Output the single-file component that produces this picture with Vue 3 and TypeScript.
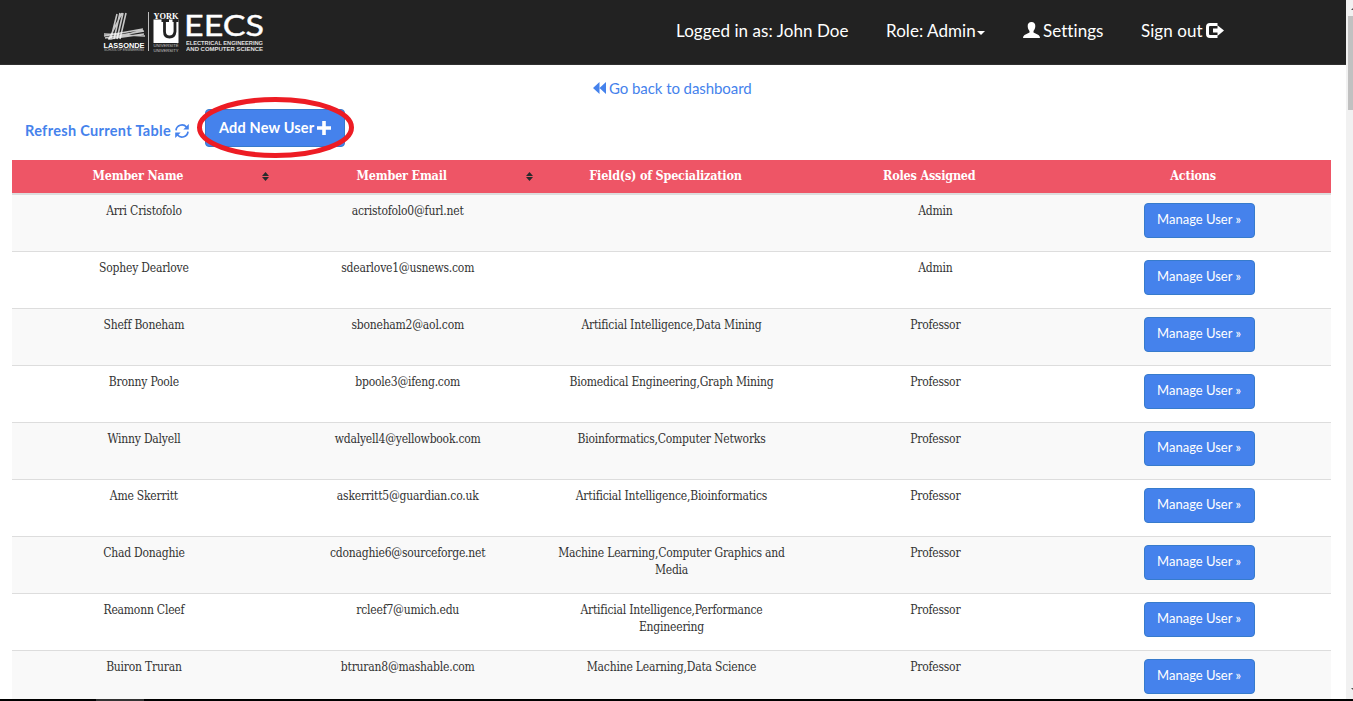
<script setup lang="ts">
interface Member {
  name: string
  email: string
  fields: string
  role: string
}

const members: Member[] = [
  { name: 'Arri Cristofolo', email: 'acristofolo0@furl.net', fields: '', role: 'Admin' },
  { name: 'Sophey Dearlove', email: 'sdearlove1@usnews.com', fields: '', role: 'Admin' },
  { name: 'Sheff Boneham', email: 'sboneham2@aol.com', fields: 'Artificial Intelligence,Data Mining', role: 'Professor' },
  { name: 'Bronny Poole', email: 'bpoole3@ifeng.com', fields: 'Biomedical Engineering,Graph Mining', role: 'Professor' },
  { name: 'Winny Dalyell', email: 'wdalyell4@yellowbook.com', fields: 'Bioinformatics,Computer Networks', role: 'Professor' },
  { name: 'Ame Skerritt', email: 'askerritt5@guardian.co.uk', fields: 'Artificial Intelligence,Bioinformatics', role: 'Professor' },
  { name: 'Chad Donaghie', email: 'cdonaghie6@sourceforge.net', fields: 'Machine Learning,Computer Graphics and Media', role: 'Professor' },
  { name: 'Reamonn Cleef', email: 'rcleef7@umich.edu', fields: 'Artificial Intelligence,Performance Engineering', role: 'Professor' },
  { name: 'Buiron Truran', email: 'btruran8@mashable.com', fields: 'Machine Learning,Data Science', role: 'Professor' },
]

const columns = [
  { label: 'Member Name', sortable: true },
  { label: 'Member Email', sortable: true },
  { label: 'Field(s) of Specialization', sortable: false },
  { label: 'Roles Assigned', sortable: false },
  { label: 'Actions', sortable: false },
]
</script>

<template>
  <div class="screen">
    <div class="viewport">
      <div class="page">
        <nav class="navbar">
          <svg class="logo" width="164" height="44" viewBox="0 0 164 44">
            <g stroke="#fff" fill="none">
              <path d="M14 4 8 28M17 3 11 29M20 3 14 29M23 3 17 29M19 3 6 29" stroke-width="1.600" opacity=".75" />
              <path d="M1 26 40 19M2 28 41 21M5 29 41 24M1 24 42 26M8 29 40 20" stroke-width="1.400" opacity=".75" />
              <path d="M45.500 2V41" stroke-width="1" opacity=".7" />
            </g>
            <g fill="#fff" font-family="'Liberation Sans', Arial, sans-serif">
              <text x="0.500" y="37.500" font-size="7" font-weight="700" textLength="41" lengthAdjust="spacingAndGlyphs">LASSONDE</text>
              <text x="1" y="41.300" font-size="3" textLength="40" lengthAdjust="spacingAndGlyphs" opacity=".65">SCHOOL OF ENGINEERING</text>
              <text x="50.500" y="8.500" font-size="8" font-family="'Liberation Serif', serif" font-weight="700" textLength="25" lengthAdjust="spacingAndGlyphs">YORK</text>
              <text x="50.500" y="37.300" font-size="3.300" textLength="25" lengthAdjust="spacingAndGlyphs" opacity=".7">UNIVERSITÉ</text>
              <text x="50.500" y="41.500" font-size="3.300" textLength="25" lengthAdjust="spacingAndGlyphs" opacity=".7">UNIVERSITY</text>
              <text x="81" y="26" font-size="29.500" font-family="Lato, sans-serif" stroke="#fff" stroke-width=".4" textLength="80" lengthAdjust="spacingAndGlyphs">EECS</text>
              <text x="83" y="34.500" font-size="5.600" font-weight="700" textLength="77" lengthAdjust="spacingAndGlyphs" opacity=".85">ELECTRICAL ENGINEERING</text>
              <text x="83" y="41" font-size="5.600" font-weight="700" textLength="77" lengthAdjust="spacingAndGlyphs" opacity=".85">AND COMPUTER SCIENCE</text>
            </g>
            <path d="M50.500 9.500H75.500V33H50.500Z" fill="#fff" />
            <path d="M58.500 10.500H66M61.500 10V21.500Q61.500 27 66.500 27T72 21.500V10M69.500 10.500H75.500" fill="none" stroke="#222" stroke-width="2.800" />
          </svg>
          <div class="links">
            <span class="link user">Logged in as: John Doe</span>
            <span class="link role">Role: Admin</span><i class="caret"></i>
            <svg class="person" width="17" height="16" viewBox="0 0 17 16">
              <path d="M8.500 0C11 0 12.500 1.800 12.300 4.300 12.200 6.300 11.400 8 10.500 9V10.500L15.500 13Q17 13.800 17 16H0Q0 13.800 1.500 13L6.500 10.500V9C5.500 8 4.800 6.300 4.700 4.300 4.500 1.800 6 0 8.500 0Z" fill="#fff" />
            </svg>
            <span class="link settings">Settings</span>
            <span class="link signout">Sign out</span>
            <svg class="exit" width="18" height="16" viewBox="0 0 18 16">
              <path d="M11.500 1.500H4Q1.500 1.500 1.500 4V11Q1.500 13.500 4 13.500H11.500" fill="none" stroke="#fff" stroke-width="3" />
              <path d="M7 5.500H11.500V2.200L18 7.500 11.500 13V9.500H7Z" fill="#fff" />
            </svg>
          </div>
        </nav>

        <a class="back">
          <svg width="13" height="12" viewBox="0 0 13 12"><path d="M6.500 0V12L0 6ZM13 0V12L6.500 6Z" fill="#4582ec" /></svg>
          <span>Go back to dashboard</span>
        </a>

        <div class="toolbar">
          <a class="refresh">
            <span>Refresh Current Table</span>
            <svg width="14" height="14" viewBox="0 0 14 14">
              <path d="M1 6.300A6 6 0 0 1 11.500 3M13 7.700A6 6 0 0 1 2.500 11" fill="none" stroke="#4582ec" stroke-width="1.700" />
              <path d="M13.800 0V5.500H8.300ZM.2 14V8.500H5.700Z" fill="#4582ec" />
            </svg>
          </a>
          <button class="add">
            <span>Add New User</span>
            <svg width="14" height="14" viewBox="0 0 14 14"><path d="M5.200 0H8.800V5.200H14V8.800H8.800V14H5.200V8.800H0V5.200H5.200Z" fill="#fff" /></svg>
            <svg class="ring" width="158" height="62" viewBox="0 0 158 62">
              <ellipse cx="78.500" cy="30.500" rx="76" ry="28" fill="none" stroke="#ed1c24" stroke-width="5" />
            </svg>
          </button>
        </div>

        <table class="members">
          <thead>
            <tr>
              <th v-for="c in columns" :key="c.label">
                <div class="head">
                  <span>{{ c.label }}</span>
                  <svg v-if="c.sortable" class="sort" width="7" height="9" viewBox="0 0 7 9"><path d="M0 4 3.500 0 7 4ZM0 5 3.500 9 7 5Z" fill="#292b2c" /></svg>
                </div>
              </th>
            </tr>
          </thead>
          <tbody>
            <tr v-for="m in members" :key="m.email">
              <td>{{ m.name }}</td>
              <td>{{ m.email }}</td>
              <td>{{ m.fields }}</td>
              <td>{{ m.role }}</td>
              <td class="action"><button class="manage">Manage User »</button></td>
            </tr>
          </tbody>
        </table>
      </div>
      <div class="scrollbar">
        <svg width="7" height="16" viewBox="0 0 7 16"><path d="M5 10 9 6V10Z" fill="#505050" /></svg>
        <div class="thumb"></div>
        <svg class="down" width="7" height="16" viewBox="0 0 7 16"><path d="M5 5H9V9Z" fill="#505050" /></svg>
      </div>
    </div>
    <div class="taskbar"><div class="task"></div></div>
  </div>
</template>

<style>
body {
  margin: 0;
  overflow: hidden;
}
</style>

<style scoped>
.screen {
  width: 1353px;
  height: 701px;
  overflow: hidden;
  background: #fff;
  font-family: Lato, sans-serif;
}
.viewport {
  display: flex;
  height: 699px;
  overflow: hidden;
}
.page {
  width: 1346px;
  flex: none;
}
.navbar {
  display: flex;
  box-sizing: border-box;
  height: 65px;
  background: #222;
  border-bottom: 1px solid #303030;
}
.logo {
  margin: 10px 0 0 103px;
  flex: none;
  overflow: visible;
}
.links {
  display: flex;
  height: 62px;
  align-items: center;
  margin-left: 409px;
  color: #fff;
  font-size: 17px;
  letter-spacing: 0.06px;
}
.link {
  white-space: nowrap;
  flex: none;
  margin-top: -2px;
}
.user {
  width: 210px;
}
.role {
  width: 91px;
}
.caret {
  border: 4px solid transparent;
  border-top-color: #fff;
  border-bottom: 0;
  margin-top: 3px;
}
.person {
  margin: 0 3px 2px 38px;
}
.settings {
  width: 98px;
}
.signout {
  width: 65px;
}
.exit {
  margin-top: -1px;
}
.back {
  display: flex;
  height: 20px;
  align-items: center;
  margin: 13px 0 0 593px;
  color: #4582ec;
  font-size: 15px;
  letter-spacing: -0.07px;
  gap: 3px;
}
.back span {
  margin-top: -1px;
}
.toolbar {
  display: flex;
  height: 38px;
  margin: 11px 0 13px 25px;
  color: #4582ec;
  font-size: 14.5px;
  font-weight: 700;
}
.refresh {
  display: flex;
  width: 180px;
  padding-top: 5px;
  align-items: center;
  box-sizing: border-box;
  white-space: nowrap;
  letter-spacing: 0.32px;
}
.refresh span {
  width: 150px;
}
.add {
  position: relative;
  display: flex;
  align-items: center;
  width: 140px;
  height: 38px;
  padding: 0 0 0 13px;
  box-sizing: border-box;
  border: 1px solid #377bcc;
  border-radius: 4px;
  background: #4582ec;
  color: #fff;
  font: inherit;
  letter-spacing: 0.16px;
  white-space: nowrap;
}
.add span {
  width: 98px;
  margin-top: -1px;
  text-align: left;
}
.add svg {
  margin-top: -1px;
}
.add .ring {
  position: absolute;
  left: -9px;
  top: -13px;
  margin: 0;
}
.members {
  width: 1319px;
  margin-left: 12px;
  table-layout: fixed;
  border-collapse: separate;
  border-spacing: 0;
  font: 12px/17px "DejaVu Serif Condensed", "DejaVu Serif", serif;
  font-stretch: condensed;
  letter-spacing: -0.21px;
  color: #333;
  text-align: center;
}
th {
  height: 17px;
  padding: 8px 8px 8px;
  background: #ee5566;
  border-bottom: 2px solid #ddd;
  color: #fff;
  font-size: 12.5px;
  letter-spacing: -0.2px;
}
.head {
  position: relative;
  height: 17px;
  line-height: 16px;
  padding-right: 12px;
}
.sort {
  position: absolute;
  right: -1px;
  top: 4px;
}
td {
  height: 40px;
  padding: 8px;
  vertical-align: top;
  border-top: 1px solid #ddd;
}
tbody tr:first-child td {
  border-top: 0;
}
tbody tr:nth-child(odd) {
  background: #f9f9f9;
}
.manage {
  display: block;
  width: 111px;
  height: 35px;
  margin: 0 auto;
  padding: 0 0 2px;
  box-sizing: border-box;
  border: 1px solid #377bcc;
  border-radius: 4px;
  background: #4582ec;
  color: #fff;
  font: 13px/31px Lato, sans-serif;
  white-space: nowrap;
}
.scrollbar {
  display: flex;
  flex-direction: column;
  width: 7px;
  background: #f1f1f1;
}
.thumb {
  height: 94px;
  margin-left: 2px;
  background: #c1c1c1;
}
.down {
  margin-top: auto;
}
.taskbar {
  height: 2px;
  background: #000;
}
.task {
  width: 48px;
  height: 2px;
  margin-left: 96px;
  background: #333;
}
</style>
